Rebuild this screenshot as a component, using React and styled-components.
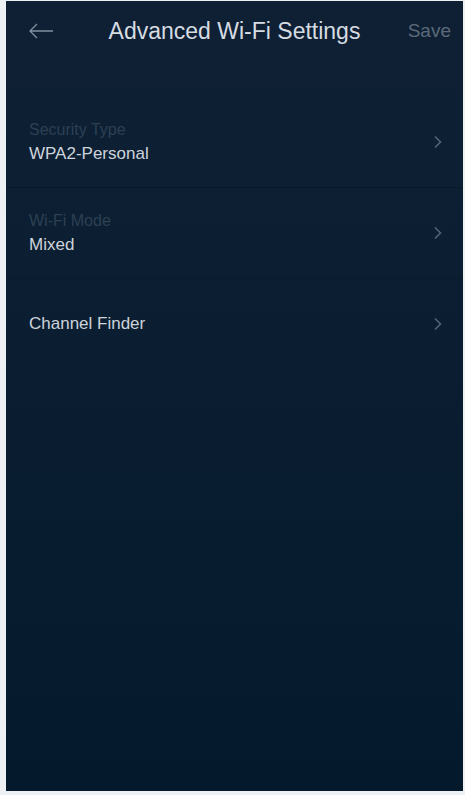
import styled, { createGlobalStyle } from 'styled-components';

const GlobalStyle = createGlobalStyle`
  html, body {
    margin: 0;
    padding: 0;
    background: #eef1f3;
  }
  body {
    font-family: "Liberation Sans", Arial, sans-serif;
  }
`

const Page = styled.div`
  width: 465px;
  height: 795px;
  padding: 1px 2px 4px 6px;
  box-sizing: border-box;
`

const Screen = styled.main`
  height: 100%;
  background: linear-gradient(180deg, #0f2034 0%, #0b1e31 45%, #041a2c 100%);
  display: flex;
  flex-direction: column;
`

const Header = styled.header`
  height: 60px;
  display: grid;
  grid-template-columns: 60px 1fr 60px;
  align-items: center;
`

const BackButton = styled.button`
  background: none;
  border: 0;
  padding: 0 0 0 22px;
  display: flex;
  align-items: center;
  cursor: pointer;
`

const Title = styled.h1`
  margin: 0;
  text-align: center;
  font-weight: 400;
  font-size: 23px;
  color: #d6dce2;
  white-space: nowrap;
`

const SaveButton = styled.button`
  background: none;
  border: 0;
  padding: 0 12px 0 0;
  text-align: right;
  font-family: inherit;
  font-size: 19px;
  color: #5b6979;
`

const List = styled.ul`
  list-style: none;
  margin: 36px 0 0;
  padding: 0;
`

const Row = styled.li`
  height: 90px;
  display: flex;
  align-items: center;
  justify-content: space-between;
  padding: 0 20px 0 23px;
  border-bottom: 1px solid ${p => (p.$last ? 'transparent' : '#0a1a2b')};
`

const Texts = styled.div`
  display: flex;
  flex-direction: column;
  gap: 5px;
`

const Label = styled.span`
  font-size: 16px;
  color: #2c4053;
`

const Value = styled.span`
  font-size: 17px;
  color: #cdd4db;
`

const Chevron = () => (
  <svg width="10" height="14" viewBox="0 0 10 14" fill="none">
    <path d="M2 1.5 L7.5 7 L2 12.5" stroke="#536477" strokeWidth="1.6" />
  </svg>
)

const rows = [
  { label: 'Security Type', value: 'WPA2-Personal' },
  { label: 'Wi-Fi Mode', value: 'Mixed' },
  { value: 'Channel Finder' },
]

export default function App() {
  return (
    <>
      <GlobalStyle />
      <Page>
        <Screen>
          <Header>
            <BackButton aria-label="Back">
              <svg width="26" height="16" viewBox="0 0 26 16" fill="none">
                <path d="M25 8 H2 M9 1 L2 8 L9 15" stroke="#8190a0" strokeWidth="1.3" />
              </svg>
            </BackButton>
            <Title>Advanced Wi-Fi Settings</Title>
            <SaveButton>Save</SaveButton>
          </Header>
          <List>
            {rows.map((row, i) => (
              <Row key={i} $last={i === rows.length - 1}>
                <Texts>
                  {row.label && <Label>{row.label}</Label>}
                  <Value>{row.value}</Value>
                </Texts>
                <Chevron />
              </Row>
            ))}
          </List>
        </Screen>
      </Page>
    </>
  )
}
